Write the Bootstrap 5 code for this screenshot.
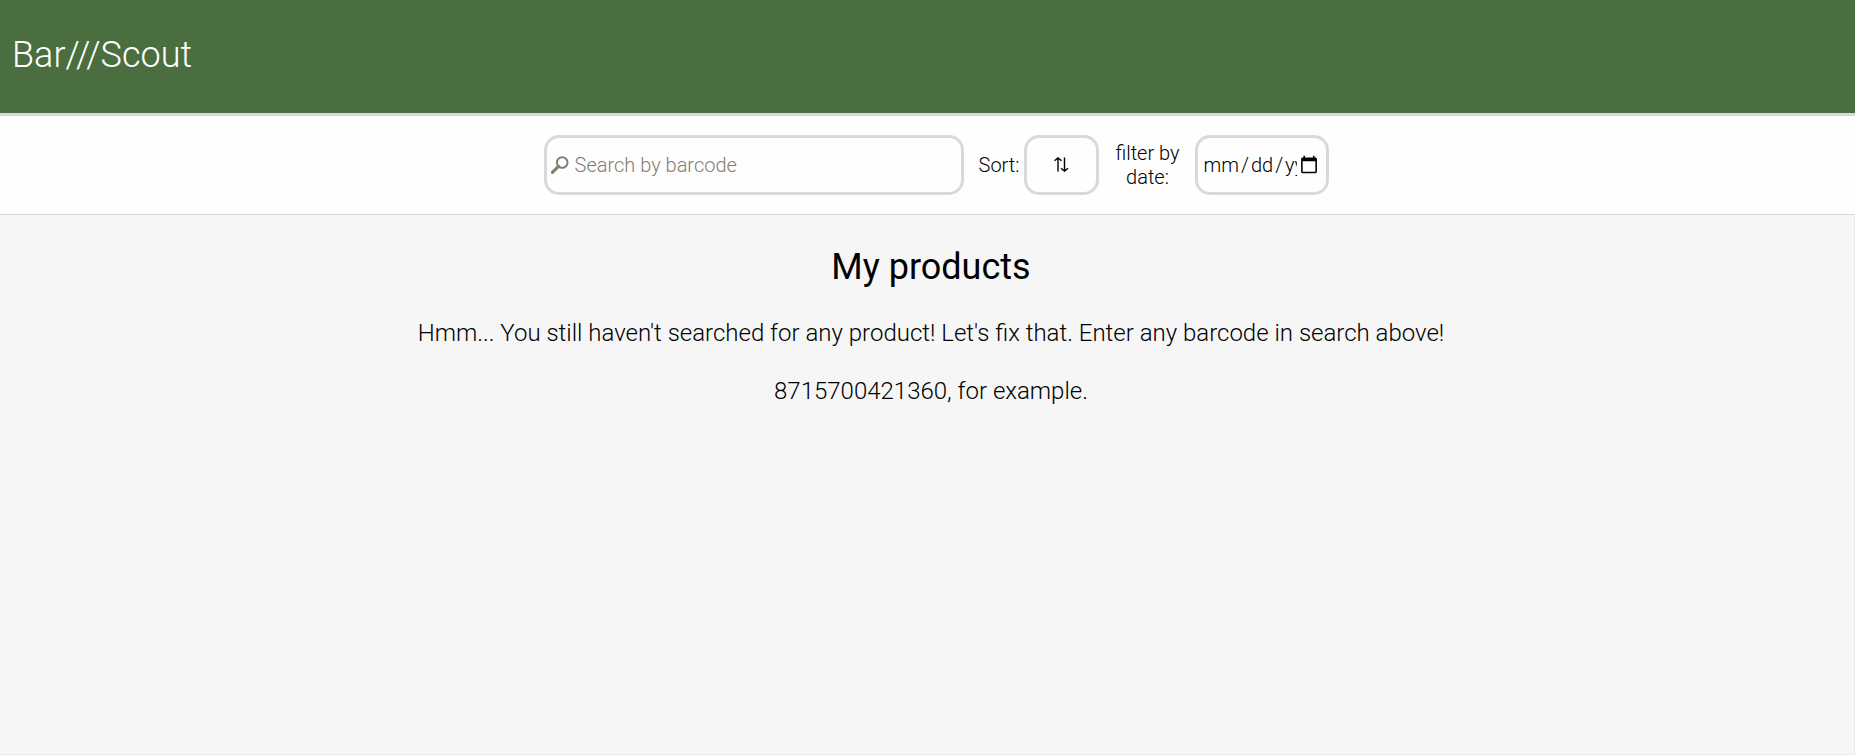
<!DOCTYPE html>
<html lang="en">
<head>
<meta charset="utf-8">
<meta name="viewport" content="width=device-width, initial-scale=1">
<title>Bar///Scout</title>
<link href="https://cdn.jsdelivr.net/npm/bootstrap@5.3.0/dist/css/bootstrap.min.css" rel="stylesheet">
<style>
  body {
    font-family: Roboto, "Liberation Sans", sans-serif;
    font-weight: 300;
    color: #000;
    background: #f6f6f6;
  }
  .site-header { background: #4a6e3f; border-bottom: 3px solid #d9d9d9; padding: 28px 12px 31px; }
  .site-brand { font-size: 36px; line-height: 54px; color: #fff; }
  .toolbar { background: #fefefe; border-bottom: 1px solid #d9d9d9; padding: 19px 0 19px 18px; font-size: 20px; line-height: 24px; }
  .toolbar .field {
    height: 60px;
    border: 3px solid #d9d9d9;
    border-radius: 15px;
    background: #fefefe;
    font-size: 20px;
    font-weight: 300;
    color: #000;
  }
  .search-box { width: 420px; }
  .search-box .field { padding: 0 4px 0 28px; }
  .search-box .field::placeholder { color: #857d70; opacity: 1; }
  .search-icon { left: 7px; }
  .sort-label { margin: 0 5px 0 15px; }
  .sort-btn { width: 75px; }
  .date-label { width: 66px; margin: 0 15px; }
  .date-box .field { width: 134px; padding: 0 5px 0 4px; }
  .date-box .field::-webkit-datetime-edit-month-field,
  .date-box .field::-webkit-datetime-edit-day-field,
  .date-box .field::-webkit-datetime-edit-year-field { padding: 0 1px; }
  .date-box .field::-webkit-datetime-edit-text { padding: 0 1px; }
  .products { border: 1px solid #e9e9e9; border-width: 0 1px 1px 0; padding: 30px 0 0 8px; }
  .products h1 { font-size: 36px; line-height: 44px; font-weight: 400; margin-bottom: 30px; }
  .products p { font-size: 24px; line-height: 28px; margin-bottom: 30px; }
</style>
</head>
<body class="min-vh-100 d-flex flex-column">
  <header class="site-header d-flex">
    <a class="site-brand text-decoration-none" href="#">Bar///Scout</a>
  </header>

  <form class="toolbar d-flex justify-content-center align-items-center">
    <div class="search-box position-relative d-flex align-items-center">
      <input id="barcode" class="field w-100" type="text" placeholder="Search by barcode" aria-label="Search by barcode">
      <svg class="search-icon position-absolute" width="18" height="18" viewBox="0 0 18 18" fill="none" stroke="#857d70" aria-hidden="true">
        <circle cx="11.2" cy="6.5" r="5.3" stroke-width="2"/>
        <path d="M7.4 10.4 1.4 16.3" stroke-width="3.2" stroke-linecap="round"/>
      </svg>
    </div>
    <label class="sort-label" for="sort">Sort:</label>
    <button id="sort" class="sort-btn field d-flex justify-content-center align-items-center p-0" type="button" aria-label="Sort">
      <svg width="16" height="18" viewBox="0 0 16 18" fill="none" stroke="#000" stroke-width="1.4" aria-hidden="true">
        <path d="M4 15.5V2M.5 4.8 4 2 7.5 4.8M10.5 1.5V15M7 12.2 10.5 15 14 12.2"/>
      </svg>
    </button>
    <label class="date-label text-center" for="date">filter by date:</label>
    <div class="date-box d-flex">
      <input id="date" class="field" type="date">
    </div>
  </form>

  <main class="products flex-grow-1 text-center">
    <h1>My products</h1>
    <p>Hmm... You still haven't searched for any product! Let's fix that. Enter any barcode in search above!</p>
    <p>8715700421360, for example.</p>
  </main>
<script src="https://cdn.jsdelivr.net/npm/bootstrap@5.3.0/dist/js/bootstrap.bundle.min.js"></script>
</body>
</html>
